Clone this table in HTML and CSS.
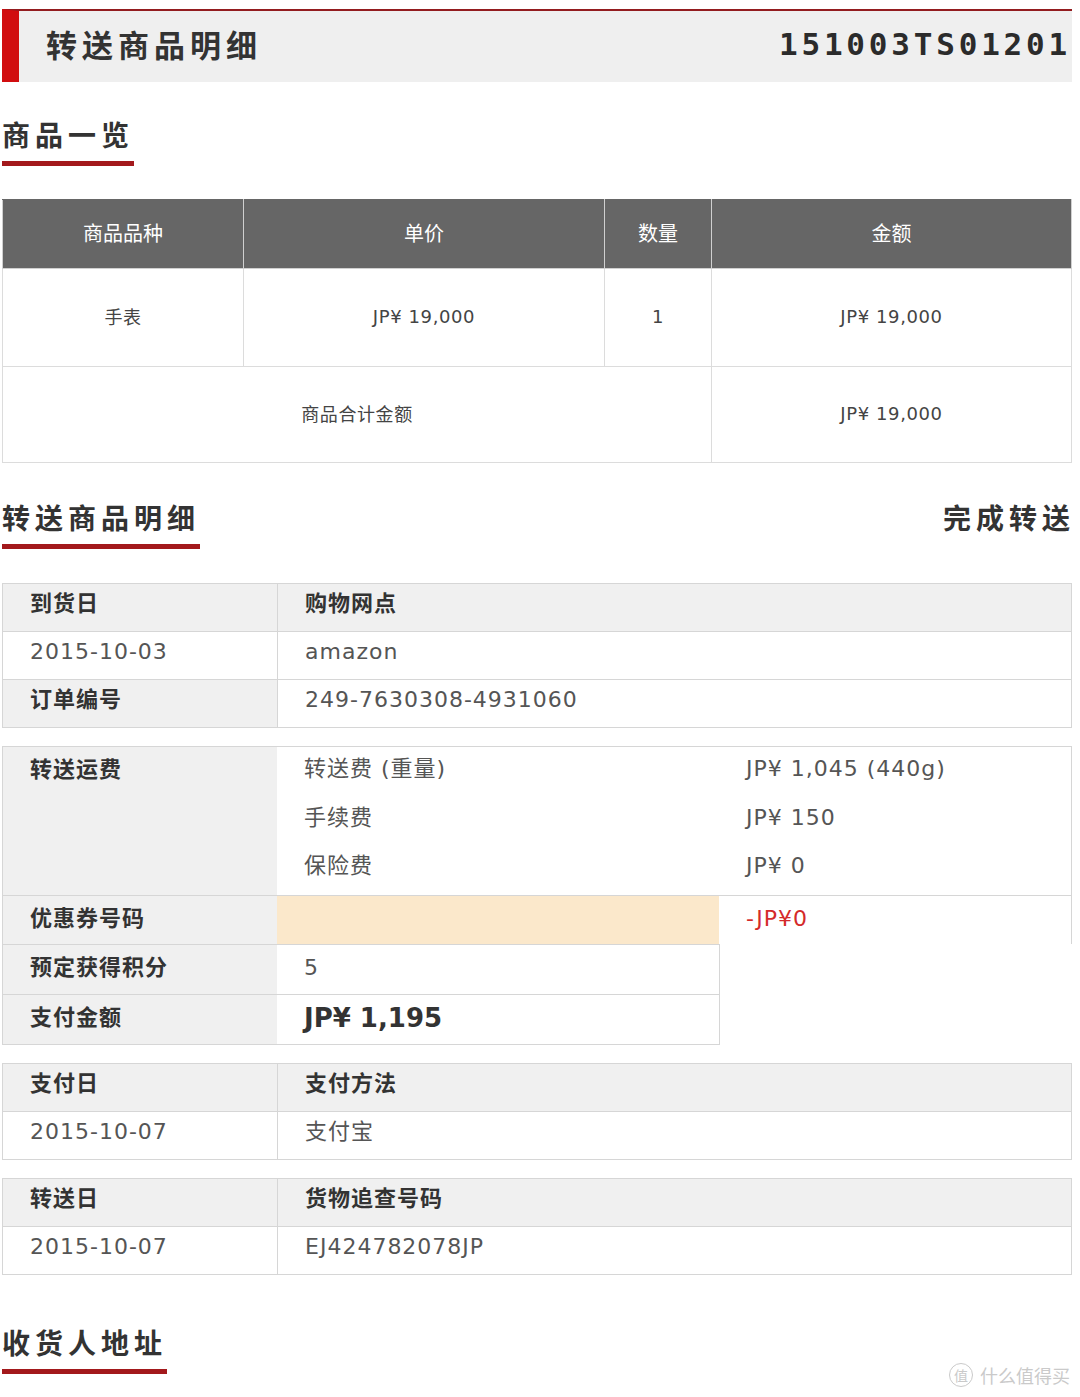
FILE: index.html
```html
<!DOCTYPE html>
<html lang="zh-CN">
<head>
  <meta charset="UTF-8" />
  <meta name="viewport" content="width=device-width, initial-scale=1.0" />
  <title>转送商品明细</title>
  <link rel="stylesheet" href="styles.css">
</head>
<body>
  <div class="page">
    <div class="topbar">
      <h1>转送商品明细</h1>
      <span class="order-no">151003TS01201</span>
    </div>

    <div class="sec-head first">
      <h2>商品一览</h2>
    </div>

    <table class="goods">
      <colgroup>
        <col style="width:241px">
        <col style="width:361px">
        <col style="width:107px">
        <col>
      </colgroup>
      <tr class="goods-head">
        <th>商品品种</th>
        <th>单价</th>
        <th>数量</th>
        <th>金额</th>
      </tr>
      <tr class="goods-row">
        <td>手表</td>
        <td>JP¥ 19,000</td>
        <td>1</td>
        <td>JP¥ 19,000</td>
      </tr>
      <tr class="goods-total">
        <td colspan="3">商品合计金额</td>
        <td>JP¥ 19,000</td>
      </tr>
    </table>

    <div class="sec-head">
      <h2>转送商品明细</h2>
      <span class="status">完成转送</span>
    </div>

    <table class="info">
      <tr class="head">
        <td class="c1">到货日</td>
        <td>购物网点</td>
      </tr>
      <tr>
        <td class="c1">2015-10-03</td>
        <td>amazon</td>
      </tr>
      <tr>
        <td class="c1 label">订单编号</td>
        <td>249-7630308-4931060</td>
      </tr>
    </table>

    <table class="fees">
      <tr class="fee-row">
        <td class="label">转送运费</td>
        <td>
          <div class="line">转送费 (重量)</div>
          <div class="line">手续费</div>
          <div class="line">保险费</div>
        </td>
        <td class="right">
          <div class="line">JP¥ 1,045 (440g)</div>
          <div class="line">JP¥ 150</div>
          <div class="line">JP¥ 0</div>
        </td>
      </tr>
      <tr class="coupon-row">
        <td class="label">优惠券号码</td>
        <td class="coupon"></td>
        <td class="right discount">-JP¥0</td>
      </tr>
      <tr class="sub-row">
        <td class="label">预定获得积分</td>
        <td class="val">5</td>
        <td class="empty"></td>
      </tr>
      <tr class="sub-row">
        <td class="label">支付金额</td>
        <td class="val total">JP¥ 1,195</td>
        <td class="empty"></td>
      </tr>
    </table>

    <table class="info">
      <tr class="head">
        <td class="c1">支付日</td>
        <td>支付方法</td>
      </tr>
      <tr>
        <td class="c1">2015-10-07</td>
        <td>支付宝</td>
      </tr>
    </table>

    <table class="info">
      <tr class="head">
        <td class="c1">转送日</td>
        <td>货物追查号码</td>
      </tr>
      <tr>
        <td class="c1">2015-10-07</td>
        <td>EJ424782078JP</td>
      </tr>
    </table>

    <div class="sec-head last">
      <h2>收货人地址</h2>
    </div>

    <div class="watermark"><span class="wm-icon">值</span>什么值得买</div>
  </div>
</body>
</html>
```

FILE: styles.css
```css
body {
  margin: 0;
  background: #fff;
  color: #555;
  font-family: "DejaVu Sans", "Noto Sans CJK SC", sans-serif;
}

.page {
  position: relative;
  padding: 9px 8px 0 2px;
  min-height: 1388px;
}

/* top bar */
.topbar {
  display: flex;
  align-items: center;
  justify-content: space-between;
  height: 65px;
  background: #efefef;
  border-top: 2px solid #931c1f;
  border-left: 17px solid #d10d0f;
  padding: 0 1px 6px 27px;
}

.topbar h1 {
  margin: 0;
  font-family: "Noto Sans CJK SC", sans-serif;
  font-size: 31px;
  font-weight: bold;
  letter-spacing: 5px;
  color: #333;
}

.order-no {
  font-family: "DejaVu Sans Mono", monospace;
  font-size: 31px;
  font-weight: bold;
  letter-spacing: 3.8px;
  color: #2b2b2b;
}

/* section heads */
.sec-head {
  display: flex;
  justify-content: space-between;
  align-items: flex-start;
  margin: 37px 0 34px;
}

.sec-head.first {
  margin: 35px 0 33px;
}

.sec-head.last {
  margin: 50px 0 0;
}

.sec-head h2 {
  margin: 0;
  font-family: "Noto Sans CJK SC", sans-serif;
  font-size: 28px;
  font-weight: bold;
  line-height: 34px;
  letter-spacing: 5px;
  color: #333;
  padding-bottom: 10px;
  border-bottom: 5px solid #a3191c;
}

.status {
  font-family: "Noto Sans CJK SC", sans-serif;
  font-size: 28px;
  font-weight: bold;
  line-height: 34px;
  letter-spacing: 5px;
  margin-right: -3px;
  color: #333;
}

/* goods table */
table {
  width: 100%;
  border-collapse: collapse;
  table-layout: fixed;
}

.goods th,
.goods td {
  border: 1px solid #dcdcdc;
  text-align: center;
  vertical-align: middle;
  font-size: 18px;
  letter-spacing: 0.6px;
  color: #444;
  padding: 0 0 3px;
}

.goods th {
  height: 65px;
  background: #666;
  color: #fff;
  font-weight: normal;
  font-size: 20px;
  letter-spacing: 0;
  font-family: "Noto Sans CJK SC", sans-serif;
  border-color: #d0d0d0;
  border-top-color: #666;
}

.goods-row td {
  height: 94px;
}

.goods-total td {
  height: 92px;
}

/* info tables */
.info {
  border: 1px solid #d6d6d6;
  margin-bottom: 18px;
}

.info td {
  padding: 0 27px 7px;
  line-height: 40px;
  vertical-align: top;
  font-size: 22px;
  letter-spacing: 1px;
  color: #555;
}

.info .c1 {
  width: 220px;
  border-right: 1px solid #d6d6d6;
}

.info tr + tr td {
  border-top: 1px solid #d6d6d6;
}

.info .head td,
.info .label,
.fees .label {
  background: #f0f0f0;
  color: #333;
  font-weight: bold;
}

/* fee table */
.fees {
  margin-bottom: 18px;
}

.fees td {
  padding: 0 27px;
  vertical-align: top;
  font-size: 22px;
  letter-spacing: 1px;
  line-height: 46px;
  color: #555;
}

.fees .label {
  width: 220px;
  border-left: 1px solid #d6d6d6;
  border-bottom: 1px solid #d6d6d6;
}

.fees td:nth-child(2) {
  width: 388px;
}

.fee-row td {
  border-top: 1px solid #d6d6d6;
  border-bottom: 1px solid #d6d6d6;
  padding-bottom: 4px;
}

.fee-row .line {
  line-height: 48.5px;
  margin-top: -2px;
}

.fee-row .line + .line {
  margin-top: 0;
}

.fees .right {
  border-right: 1px solid #d6d6d6;
}

.coupon-row td {
  height: 48px;
}

.coupon {
  background: #fbe8cb;
  border-bottom: 1px solid #d6d6d6;
}

.fees .discount {
  color: #d42a2a;
}

.sub-row .val {
  border-right: 1px solid #d6d6d6;
  border-bottom: 1px solid #d6d6d6;
}

.sub-row td {
  height: 49px;
}

.fees .total {
  font-size: 26px;
  font-weight: bold;
  letter-spacing: 0;
  color: #333;
}

.empty {
  background: transparent;
}

/* watermark */
.watermark {
  position: absolute;
  top: 1362px;
  right: 10px;
  display: flex;
  align-items: center;
  gap: 7px;
  font-family: "Noto Sans CJK SC", sans-serif;
  font-size: 18px;
  color: #cacaca;
}

.wm-icon {
  width: 22px;
  height: 22px;
  border: 1.5px solid #cacaca;
  border-radius: 50%;
  font-size: 14px;
  line-height: 22px;
  text-align: center;
}
```
